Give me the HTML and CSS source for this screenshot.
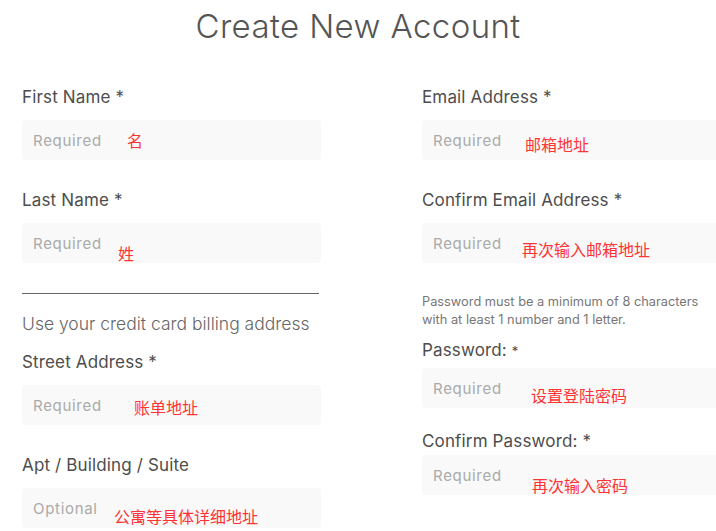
FILE: index.html
```html
<!DOCTYPE html>
<html lang="en">
  <head>
    <meta charset="UTF-8" />
    <meta name="viewport" content="width=device-width, initial-scale=1.0" />
    <title>Create New Account</title>
    <link rel="stylesheet" href="styles.css">
  </head>
  <body>
    <h1 class="title">Create New Account</h1>
    <form class="account-form">
      <div class="col">
        <div class="field">
          <label class="field-label">First Name *</label>
          <div class="field-input">
            <span class="placeholder">Required</span>
            <span class="note note-first">名</span>
          </div>
        </div>
        <div class="field">
          <label class="field-label">Last Name *</label>
          <div class="field-input">
            <span class="placeholder">Required</span>
            <span class="note note-last">姓</span>
          </div>
        </div>

        <hr class="divider">
        <p class="billing-note">Use your credit card billing address</p>

        <div class="field">
          <label class="field-label">Street Address *</label>
          <div class="field-input">
            <span class="placeholder">Required</span>
            <span class="note note-street">账单地址</span>
          </div>
        </div>
        <div class="field">
          <label class="field-label">Apt / Building / Suite</label>
          <div class="field-input">
            <span class="placeholder">Optional</span>
            <span class="note note-apt">公寓等具体详细地址</span>
          </div>
        </div>
      </div>

      <div class="col">
        <div class="field">
          <label class="field-label">Email Address *</label>
          <div class="field-input">
            <span class="placeholder">Required</span>
            <span class="note note-email">邮箱地址</span>
          </div>
        </div>
        <div class="field">
          <label class="field-label">Confirm Email Address *</label>
          <div class="field-input">
            <span class="placeholder">Required</span>
            <span class="note note-email2">再次输入邮箱地址</span>
          </div>
        </div>

        <p class="hint">Password must be a minimum of 8 characters<br>with at least 1 number and 1 letter.</p>

        <div class="field field-pass">
          <label class="field-label">Password: <span class="req-small">*</span></label>
          <div class="field-input">
            <span class="placeholder">Required</span>
            <span class="note note-pass">设置登陆密码</span>
          </div>
        </div>
        <div class="field field-pass2">
          <label class="field-label">Confirm Password: *</label>
          <div class="field-input">
            <span class="placeholder">Required</span>
            <span class="note note-pass2">再次输入密码</span>
          </div>
        </div>
      </div>
    </form>
  </body>
</html>
```

FILE: styles.css
```css
body {
  margin: 0;
  font-family: Inter, "Liberation Sans", sans-serif;
  color: #4d4d4d;
  background: #fff;
  overflow: hidden;
}
.title {
  margin: 6px 0 0;
  text-align: center;
  font-size: 33px;
  line-height: 40px;
  font-weight: 300;
  letter-spacing: 0.4px;
  color: #555;
}
.account-form {
  display: grid;
  grid-template-columns: 299px 320px;
  column-gap: 101px;
  padding: 41px 0 0 22px;
}
.field {
  margin-bottom: 30px;
}
.field-label {
  display: block;
  font-size: 17px;
  line-height: 20px;
  letter-spacing: 0.15px;
  margin-bottom: 13px;
  color: #4d4d4d;
}
.req-small {
  font-size: 13px;
}
.field-input {
  position: relative;
  height: 40px;
  padding: 0 11px;
  display: flex;
  align-items: center;
  background: #f9f9f9;
  border-radius: 4px;
}
.placeholder {
  font-size: 15px;
  letter-spacing: 0.7px;
  color: #aaa;
}
.divider {
  margin: 0 2px 19px 0;
  border: 0;
  border-top: 1px solid #666;
}
.billing-note {
  margin: 0 0 17px;
  font-size: 17.5px;
  line-height: 22px;
  font-weight: 300;
  color: #666;
}
.hint {
  margin: 1px 0 11px;
  font-size: 12.8px;
  line-height: 18px;
  color: #777;
}
.field-pass {
  margin-bottom: 23px;
}
.field-pass .field-label {
  margin-bottom: 7px;
}
.field-pass2 .field-label {
  margin-bottom: 4px;
}

/* red annotations drawn over the inputs */
.note {
  position: absolute;
  font-family: "Noto Sans CJK SC", sans-serif;
  font-size: 16px;
  line-height: 20px;
  color: #ff3333;
  white-space: nowrap;
}
.note-first { left: 105px; top: 10px; }
.note-last { left: 96px; top: 20px; }
.note-street { left: 112px; top: 12px; }
.note-apt { left: 92px; top: 18px; }
.note-email { left: 103px; top: 14px; }
.note-email2 { left: 100px; top: 16px; }
.note-pass { left: 109px; top: 17px; }
.note-pass2 { left: 110px; top: 20px; }
```
